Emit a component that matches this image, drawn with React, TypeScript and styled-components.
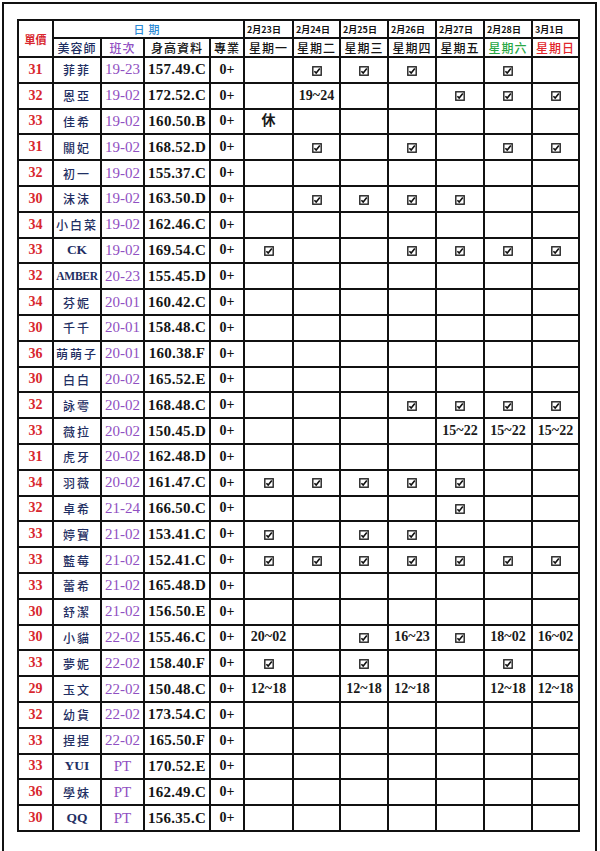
import React from 'react';
import styled, { createGlobalStyle } from 'styled-components';

const GlobalStyle = createGlobalStyle`
  html, body {
    margin: 0;
    padding: 0;
    background: #fff;
  }
  body {
    font-family: "Liberation Serif", "Noto Sans CJK TC", serif;
  }
`;

const RED = '#d8272e';
const NAVY = '#1f2f63';
const PURPLE = '#9050c2';
const INK = '#141414';

type Day = '' | 'v' | string;

interface Row {
  price: number;
  name: string;
  shift: string;
  size: string;
  days: Day[];
}

const dates = ['2月23日', '2月24日', '2月25日', '2月26日', '2月27日', '2月28日', '3月1日'];
const weekdays = [
  { label: '星期一', color: INK },
  { label: '星期二', color: INK },
  { label: '星期三', color: INK },
  { label: '星期四', color: INK },
  { label: '星期五', color: INK },
  { label: '星期六', color: '#2aa845' },
  { label: '星期日', color: '#e2262c' },
];

const E = '';
const V = 'v';

const rows: Row[] = [
  { price: 31, name: '菲菲', shift: '19-23', size: '157.49.C', days: [E, V, V, V, E, V, E] },
  { price: 32, name: '恩亞', shift: '19-02', size: '172.52.C', days: [E, '19~24', E, E, V, V, V] },
  { price: 33, name: '佳希', shift: '19-02', size: '160.50.B', days: ['休', E, E, E, E, E, E] },
  { price: 31, name: '關妃', shift: '19-02', size: '168.52.D', days: [E, V, E, V, E, V, V] },
  { price: 32, name: '初一', shift: '19-02', size: '155.37.C', days: [E, E, E, E, E, E, E] },
  { price: 30, name: '沫沫', shift: '19-02', size: '163.50.D', days: [E, V, V, V, V, E, E] },
  { price: 34, name: '小白菜', shift: '19-02', size: '162.46.C', days: [E, E, E, E, E, E, E] },
  { price: 33, name: 'CK', shift: '19-02', size: '169.54.C', days: [V, E, E, V, V, V, V] },
  { price: 32, name: 'AMBER', shift: '20-23', size: '155.45.D', days: [E, E, E, E, E, E, E] },
  { price: 34, name: '芬妮', shift: '20-01', size: '160.42.C', days: [E, E, E, E, E, E, E] },
  { price: 30, name: '千千', shift: '20-01', size: '158.48.C', days: [E, E, E, E, E, E, E] },
  { price: 36, name: '萌萌子', shift: '20-01', size: '160.38.F', days: [E, E, E, E, E, E, E] },
  { price: 30, name: '白白', shift: '20-02', size: '165.52.E', days: [E, E, E, E, E, E, E] },
  { price: 32, name: '詠雩', shift: '20-02', size: '168.48.C', days: [E, E, E, V, V, V, V] },
  { price: 33, name: '薇拉', shift: '20-02', size: '150.45.D', days: [E, E, E, E, '15~22', '15~22', '15~22'] },
  { price: 31, name: '虎牙', shift: '20-02', size: '162.48.D', days: [E, E, E, E, E, E, E] },
  { price: 34, name: '羽薇', shift: '20-02', size: '161.47.C', days: [V, V, V, V, V, E, E] },
  { price: 32, name: '卓希', shift: '21-24', size: '166.50.C', days: [E, E, E, E, V, E, E] },
  { price: 33, name: '婷寶', shift: '21-02', size: '153.41.C', days: [V, E, V, V, E, E, E] },
  { price: 33, name: '藍莓', shift: '21-02', size: '152.41.C', days: [V, V, V, V, V, V, V] },
  { price: 33, name: '蕾希', shift: '21-02', size: '165.48.D', days: [E, E, E, E, E, E, E] },
  { price: 30, name: '舒潔', shift: '21-02', size: '156.50.E', days: [E, E, E, E, E, E, E] },
  { price: 30, name: '小貓', shift: '22-02', size: '155.46.C', days: ['20~02', E, V, '16~23', V, '18~02', '16~02'] },
  { price: 33, name: '夢妮', shift: '22-02', size: '158.40.F', days: [V, E, V, E, E, V, E] },
  { price: 29, name: '玉文', shift: '22-02', size: '150.48.C', days: ['12~18', E, '12~18', '12~18', E, '12~18', '12~18'] },
  { price: 32, name: '幼貨', shift: '22-02', size: '173.54.C', days: [E, E, E, E, E, E, E] },
  { price: 33, name: '捏捏', shift: '22-02', size: '165.50.F', days: [E, E, E, E, E, E, E] },
  { price: 33, name: 'YUI', shift: 'PT', size: '170.52.E', days: [E, E, E, E, E, E, E] },
  { price: 36, name: '學妹', shift: 'PT', size: '162.49.C', days: [E, E, E, E, E, E, E] },
  { price: 30, name: 'QQ', shift: 'PT', size: '156.35.C', days: [E, E, E, E, E, E, E] },
];

const colWidths = [35, 48, 43, 66, 34, 49, 47, 48, 48, 48, 48, 47];

function CheckBox() {
  return (
    <svg width="10" height="10" viewBox="0 0 10 10" aria-hidden="true">
      <rect x="0.8" y="0.8" width="8.4" height="8.4" fill="#fff" stroke="#222" strokeWidth="1.4" />
      <path d="M2.4 5.2 L4.2 7.1 L7.8 2.6" fill="none" stroke="#111" strokeWidth="1.6" />
    </svg>
  );
}

function nameKind(name: string): 'cjk' | 'latin' | 'long' {
  if (!/^[A-Z]+$/.test(name)) return 'cjk';
  return name.length > 3 ? 'long' : 'latin';
}

export default function App() {
  return (
    <>
      <GlobalStyle />
      <Frame>
        <Sheet>
          <colgroup>
            {colWidths.map((w, i) => (
              <col key={i} style={{ width: w }} />
            ))}
          </colgroup>
          <thead>
            <TopRow>
              <PriceHead rowSpan={2}>單價</PriceHead>
              <DateTitle colSpan={4}>日期</DateTitle>
              {dates.map((d) => (
                <DateHead key={d}>{d}</DateHead>
              ))}
            </TopRow>
            <SubRow>
              <LabelHead $color={NAVY}>美容師</LabelHead>
              <LabelHead $color={PURPLE}>班次</LabelHead>
              <LabelHead $color={INK}>身高資料</LabelHead>
              <LabelHead $color={INK}>專業</LabelHead>
              {weekdays.map((w) => (
                <LabelHead key={w.label} $color={w.color}>
                  {w.label}
                </LabelHead>
              ))}
            </SubRow>
          </thead>
          <tbody>
            {rows.map((r) => (
              <BodyRow key={r.name}>
                <PriceCell>{r.price}</PriceCell>
                <NameCell $kind={nameKind(r.name)}>{r.name}</NameCell>
                <ShiftCell>{r.shift}</ShiftCell>
                <SizeCell>{r.size}</SizeCell>
                <ProCell>0+</ProCell>
                {r.days.map((d, i) => (
                  <DayCell key={i}>{d === 'v' ? <CheckBox /> : d}</DayCell>
                ))}
              </BodyRow>
            ))}
          </tbody>
        </Sheet>
      </Frame>
    </>
  );
}

const Frame = styled.div`
  box-sizing: border-box;
  margin: 2px 0 0 2px;
  width: 595px;
  height: 849px;
  overflow: hidden;
  border: 2px solid #111;
  border-bottom: none;
  padding: 15px 0 0 13px;
`;

const Sheet = styled.table`
  border-collapse: collapse;
  table-layout: fixed;
  width: 561px;
  border: 2px solid #111;

  th,
  td {
    border: 2px solid #111;
    padding: 0;
    text-align: center;
    vertical-align: middle;
    white-space: nowrap;
    overflow: hidden;
  }
`;

const TopRow = styled.tr`
  height: 18px;
`;

const SubRow = styled.tr`
  height: 17px;
`;

const BodyRow = styled.tr`
  height: 25.8px;
`;

const PriceHead = styled.th`
  color: ${RED};
  font-family: "Noto Sans CJK TC", sans-serif;
  font-size: 11px;
  font-weight: 700;
`;

const DateTitle = styled.th`
  color: #2c8bd6;
  font-family: "Noto Sans CJK TC", sans-serif;
  font-size: 11px;
  font-weight: 500;
  letter-spacing: 4px;
`;

const DateHead = styled.th`
  color: #111;
  font-family: "Noto Sans CJK TC", sans-serif;
  font-size: 9px;
  font-weight: 700;
  text-align: left !important;
  padding-left: 2px !important;
`;

const LabelHead = styled.th<{ $color: string }>`
  color: ${(p) => p.$color};
  font-family: "Noto Sans CJK TC", sans-serif;
  font-size: 12px;
  font-weight: 500;
  letter-spacing: 1px;
`;

const PriceCell = styled.td`
  color: ${RED};
  font-family: "Liberation Serif", serif;
  font-size: 14px;
  font-weight: 700;
`;

const NameCell = styled.td<{ $kind: 'cjk' | 'latin' | 'long' }>`
  color: ${NAVY};
  font-family: ${(p) => (p.$kind === 'cjk' ? '"Noto Sans CJK TC", sans-serif' : '"Liberation Serif", serif')};
  font-size: ${(p) => (p.$kind === 'cjk' ? '12px' : p.$kind === 'latin' ? '13.5px' : '11.5px')};
  font-weight: ${(p) => (p.$kind === 'cjk' ? 500 : 700)};
  letter-spacing: ${(p) => (p.$kind === 'cjk' ? '2px' : p.$kind === 'latin' ? '0' : '-0.3px')};
`;

const ShiftCell = styled.td`
  color: ${PURPLE};
  font-family: "Liberation Serif", serif;
  font-size: 15px;
`;

const SizeCell = styled.td`
  color: ${INK};
  font-family: "Liberation Serif", serif;
  font-size: 15px;
  font-weight: 700;
  letter-spacing: 0.3px;
`;

const ProCell = styled.td`
  color: ${INK};
  font-family: "Liberation Serif", serif;
  font-size: 14px;
  font-weight: 700;
`;

const DayCell = styled.td`
  color: #1a1a1a;
  font-family: "Liberation Serif", "Noto Sans CJK TC", serif;
  font-size: 14px;
  font-weight: 700;
  line-height: 1;

  svg {
    display: inline-block;
    vertical-align: middle;
  }
`;
